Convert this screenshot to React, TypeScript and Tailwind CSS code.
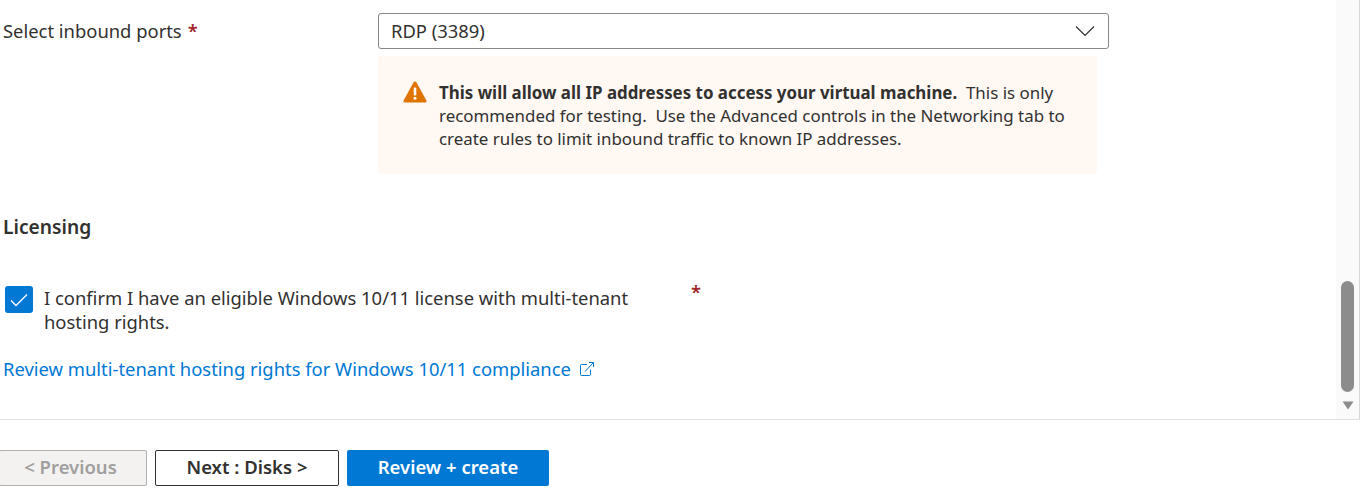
import React from "react";

function ExternalLinkIcon() {
  return (
    <svg width="16" height="16" viewBox="0 0 16 16" fill="none" stroke="#0078d4" strokeWidth="1">
      <path d="M8 3.5H2.5a1 1 0 0 0-1 1v9a1 1 0 0 0 1 1h8a1 1 0 0 0 1-1V8.5" />
      <path d="M6 10.5 14.5 1.5M10 1.5h4.5V6" />
    </svg>
  );
}

export default function App() {
  return (
    <div className="flex h-[493px] w-full flex-col overflow-hidden bg-white font-['Noto_Sans',sans-serif] text-[18.4px] text-[#323130]">
      {/* Scrolling form area */}
      <div className="mr-px flex h-[420px] shrink-0 border-b border-[#e0e0e0]">
        <div className="flex-1 pl-[3px] pt-[13px]">
          <div className="flex">
            <div className="flex h-9 w-[375px] items-center">
              Select inbound ports <span className="ml-[6px] font-semibold text-[#a4262c]">*</span>
            </div>
            <div className="w-[731px]">
              <div className="flex h-9 items-center justify-between rounded-[3px] border border-[#8a8886] pl-[12px] pr-[13px]">
                <span>RDP (3389)</span>
                <svg width="20" height="12" viewBox="0 0 20 12" fill="none" stroke="#323130" strokeWidth="1.2">
                  <path d="M1 1.5 10 10.5 19 1.5" />
                </svg>
              </div>
              <div className="mt-[7px] flex h-[118px] w-[719px] rounded-[3px] bg-[#fff8f3] pl-[25px] pt-[25px] leading-[23px]">
                <svg className="shrink-0" width="24" height="22" viewBox="0 0 24 22">
                  <path d="M12 0.5c.6 0 1.1.3 1.4.8l10 18.2c.5 1-.2 2-1.3 2H1.9c-1.1 0-1.8-1-1.3-2l10-18.2c.3-.5.8-.8 1.4-.8z" fill="#e07400" />
                  <rect x="10.7" y="6.5" width="2.6" height="8" rx="1" fill="#fff" />
                  <circle cx="12" cy="17.3" r="1.5" fill="#fff" />
                </svg>
                <p className="ml-[12px] w-[640px] text-[16.9px]">
                  <b className="font-bold">This will allow all IP addresses to access your virtual machine.</b>&nbsp; This is only recommended for testing.&nbsp; Use the Advanced controls in the Networking tab to create rules to limit inbound traffic to known IP addresses.
                </p>
              </div>
            </div>
          </div>

          <h2 className="mt-[40px] text-[19.2px] font-semibold leading-[26px]">Licensing</h2>

          <div className="mt-[45px] flex pl-[2px]">
            <div className="mt-px flex h-[27px] w-[28px] shrink-0 items-center justify-center rounded-[3px] bg-[#0078d4]">
              <svg width="18" height="14" viewBox="0 0 18 14" fill="none" stroke="#fff" strokeWidth="1.3">
                <path d="M1 7.5 6 12.5 17 1.5" />
              </svg>
            </div>
            <p className="ml-[11px] mt-px w-[610px] leading-[24px]">
              I confirm I have an eligible Windows 10/11 license with multi-tenant hosting rights.
            </p>
            <span className="ml-[37px] mt-[-7px] font-semibold text-[#a4262c]">*</span>
          </div>

          <a className="mt-[22px] flex items-center gap-[8px] leading-[26px] text-[#0078d4]">
            Review multi-tenant hosting rights for Windows 10/11 compliance
            <ExternalLinkIcon />
          </a>
        </div>

        {/* Scrollbar */}
        <div className="flex w-[24px] shrink-0 flex-col items-center border-r border-[#d6d6d6] bg-[#fafafa]">
          <div className="mt-[281px] h-[111px] w-[13px] rounded-full bg-[#8c8c8c]" />
          <svg className="mt-[9px]" width="12" height="9" viewBox="0 0 12 9">
            <path d="M0.5 0.5h11L6 8.5z" fill="#8c8c8c" />
          </svg>
        </div>
      </div>

      {/* Footer buttons */}
      <div className="ml-[-1px] mt-[30px] flex gap-2 text-[18.5px] font-semibold leading-[32px]">
        <button className="h-9 w-[148px] rounded-[2px] border border-[#b3b0ad] bg-[#f3f2f1] pb-[2px] pr-[5px] text-[#a19f9d]">&lt; Previous</button>
        <button className="h-9 w-[184px] rounded-[2px] border border-[#323130] bg-white pb-[2px] text-[#323130]">Next : Disks &gt;</button>
        <button className="h-9 w-[202px] rounded-[2px] bg-[#0078d4] pb-[2px] text-white">Review + create</button>
      </div>
    </div>
  );
}
